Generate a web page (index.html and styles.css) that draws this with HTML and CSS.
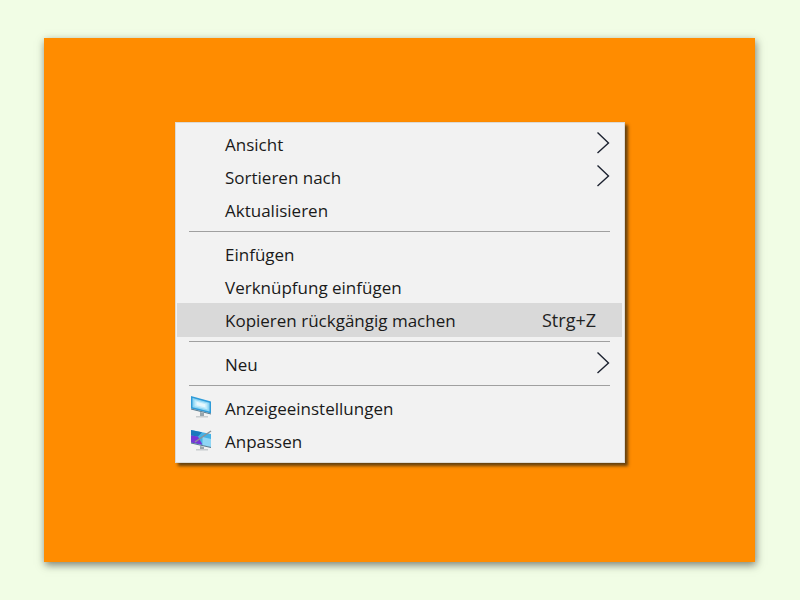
FILE: index.html
```html
<!DOCTYPE html>
<html lang="de">
<head>
  <meta charset="UTF-8">
  <title>Kontextmenü</title>
  <link rel="stylesheet" href="styles.css">
</head>
<body>

  <div class="flaeche">
    <div class="menu">
      <div class="item">
        <span class="label">Ansicht</span>
        <svg class="pfeil" width="16" height="24" viewBox="0 0 16 24"><path d="M2.5 1.5 L13.5 12 L2.5 22"/></svg>
      </div>
      <div class="item">
        <span class="label">Sortieren nach</span>
        <svg class="pfeil" width="16" height="24" viewBox="0 0 16 24"><path d="M2.5 1.5 L13.5 12 L2.5 22"/></svg>
      </div>
      <div class="item">
        <span class="label">Aktualisieren</span>
      </div>
      <div class="trenner"></div>
      <div class="item">
        <span class="label">Einfügen</span>
      </div>
      <div class="item">
        <span class="label">Verknüpfung einfügen</span>
      </div>
      <div class="item aktiv">
        <span class="label">Kopieren rückgängig machen</span>
        <span class="kuerzel">Strg+Z</span>
      </div>
      <div class="trenner"></div>
      <div class="item">
        <span class="label">Neu</span>
        <svg class="pfeil" width="16" height="24" viewBox="0 0 16 24"><path d="M2.5 1.5 L13.5 12 L2.5 22"/></svg>
      </div>
      <div class="trenner"></div>
      <div class="item">
        <svg class="icon" width="24" height="24" viewBox="0 0 24 24">
          <path d="M2 2 L22 7.5 V19.5 L2 14.5 Z" fill="#2f9bd8"/>
          <path d="M3.5 4 L20.5 8.7 V17.6 L3.5 13.3 Z" fill="#8fd6f5"/>
          <path d="M5.5 6 L18.5 9.6 V15.6 L5.5 12.3 Z" fill="#bfeafb"/>
          <path d="M7.5 7.8 L16.5 10.3 V13.6 L7.5 11.3 Z" fill="#e6f8fe"/>
          <path d="M2 14.5 L22 19.5 V20.5 L2 15.5 Z" fill="#56788c"/>
          <path d="M11 18 L15 19 V22 H11 Z" fill="#9aa5ab"/>
          <path d="M7 22 H19 V23.5 H7 Z" fill="#c8cccf"/>
        </svg>
        <span class="label">Anzeigeeinstellungen</span>
      </div>
      <div class="item">
        <svg class="icon" width="24" height="24" viewBox="0 0 24 24">
          <path d="M2 3 L22 7 V20 L2 15.5 Z" fill="#45b2e6"/>
          <path d="M2 3 L13 5.2 L9 9.5 L2 8.5 Z" fill="#1b78bd"/>
          <path d="M2 8.5 L9 9.5 L13.5 17.8 L2 15.5 Z" fill="#7636d6"/>
          <path d="M13.5 10 L22 12 V20 L13.5 18 Z" fill="#8fd6f5"/>
          <path d="M6 15 L22 4" stroke="#8d9296" stroke-width="1.5" fill="none"/>
          <path d="M2 15.5 L22 20 V21 L2 16.5 Z" fill="#56788c"/>
          <path d="M11 19 L15 20 V22 H11 Z" fill="#9aa5ab"/>
          <path d="M7 22 H19 V23.5 H7 Z" fill="#c8cccf"/>
        </svg>
        <span class="label">Anpassen</span>
      </div>
    </div>
  </div>

</body>
</html>
```

FILE: styles.css
```css
* {
  box-sizing: border-box;
  margin: 0;
  padding: 0;
}

body {
  width: 800px;
  height: 600px;
  overflow: hidden;
  background-color: #f1fde5;
  padding: 38px 45px 38px 44px;
  font-family: "Open Sans", sans-serif;
}

.flaeche {
  height: 524px;
  background-color: #ff8c00;
  box-shadow: 1px 3px 8px rgba(60, 60, 50, 0.65);
  padding: 84px 130px 0 131px;
}

.menu {
  width: 450px;
  height: 341px;
  background-color: #f2f2f2;
  border: 1px solid #dcdad4;
  box-shadow: 3px 3px 3px rgba(50, 40, 20, 0.75);
  padding: 5px 2px 5px 1px;
}

.item {
  position: relative;
  display: flex;
  align-items: center;
  height: 33px;
  padding: 0 26px 0 48px;
  font-size: 17px;
  color: #1a1a1a;
}

.item.aktiv {
  height: 34px;
  margin-top: -1px;
  background-color: #d9d9d9;
}

.label {
  flex: 1;
}

.kuerzel {
  font-size: 18px;
  color: #222;
}

.pfeil {
  position: absolute;
  right: 11px;
  top: 3px;
  fill: none;
  stroke: #1c2230;
  stroke-width: 1.4;
}

.icon {
  position: absolute;
  left: 12px;
  top: 2px;
}

.trenner {
  height: 1px;
  margin: 4px 12px 6px 12px;
  background-color: #a0a0a0;
}
```
